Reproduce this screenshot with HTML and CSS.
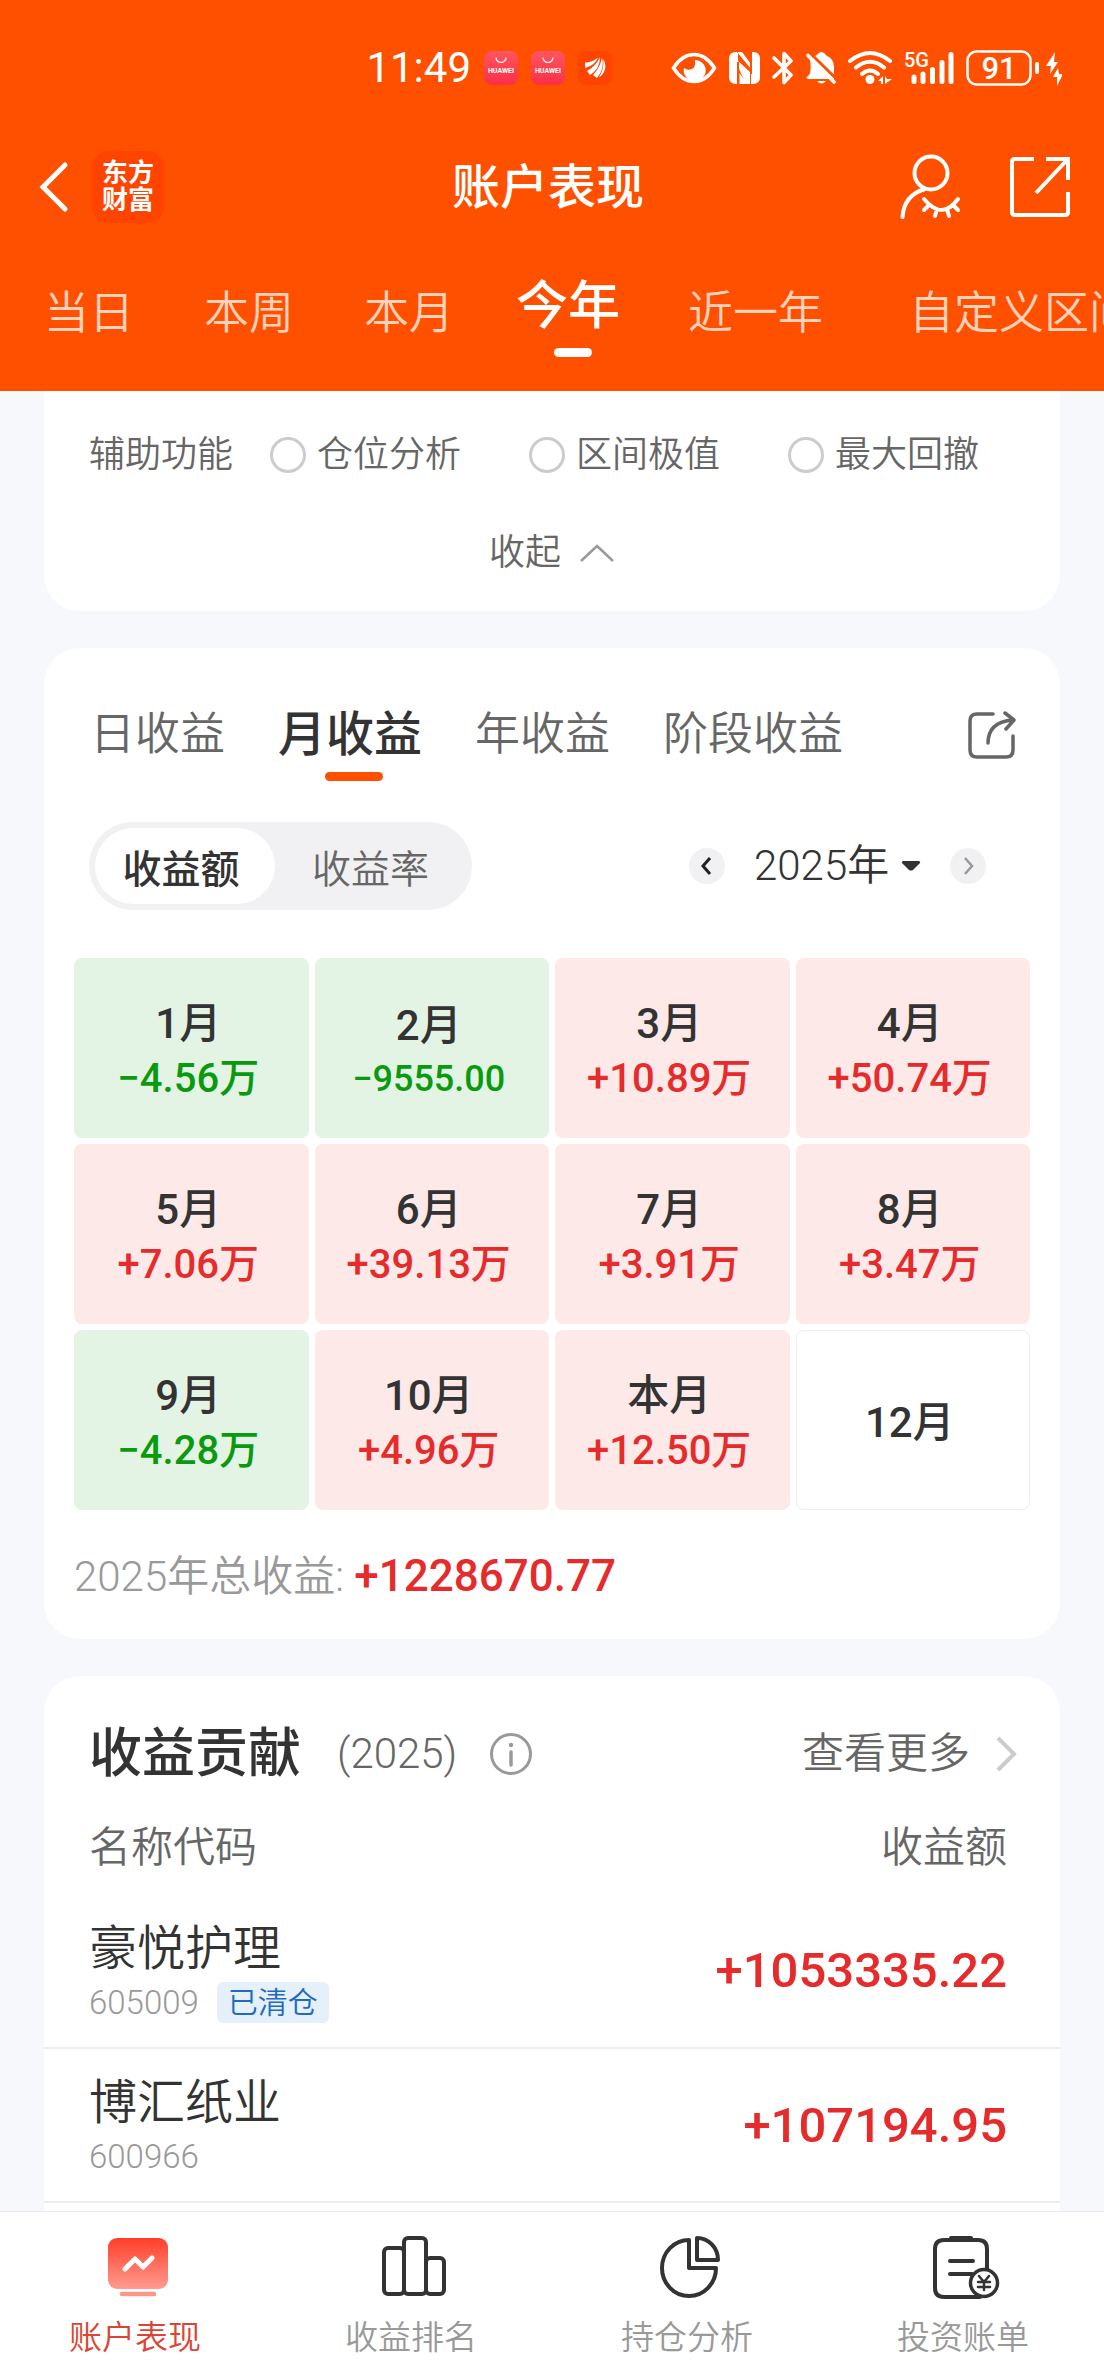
FILE: index.html
```html
<!DOCTYPE html>
<html lang="zh-CN">
<head>
<meta charset="utf-8">
<meta name="viewport" content="width=device-width, initial-scale=1">
<title>账户表现</title>
<link rel="stylesheet" href="styles.css">
</head>
<body>
<div class="app">
  <header class="top">
    <div class="status">
      <div class="status-left">
        <span class="clock">11:49</span>
        <svg class="app-dot" viewBox="0 0 34 34" aria-hidden="true"><defs><linearGradient id="hw" x1="0" y1="0" x2="0" y2="1"><stop offset="0" stop-color="#ff5560"/><stop offset="1" stop-color="#fb2f45"/></linearGradient></defs><rect width="34" height="34" rx="8" fill="url(#hw)"/><path d="M12 6.500a5 5 0 0 0 10 0" fill="none" stroke="#fff" stroke-width="1.200"/><text x="17" y="22" text-anchor="middle" class="hw-text">HUAWEI</text></svg>
        <svg class="app-dot" viewBox="0 0 34 34" aria-hidden="true"><rect width="34" height="34" rx="8" fill="url(#hw)"/><path d="M12 6.500a5 5 0 0 0 10 0" fill="none" stroke="#fff" stroke-width="1.200"/><text x="17" y="22" text-anchor="middle" class="hw-text">HUAWEI</text></svg>
        <svg class="app-dot" viewBox="0 0 34 34" aria-hidden="true"><rect width="34" height="34" rx="8" fill="#ff4400"/><g fill="#fff"><path d="M7 11.500Q14 11.500 20 6.500Q17 14.500 7 17Z"/><path d="M9 20Q18 15 22 6Q22 18 12 24Z"/><path d="M15 24Q22 17 24 6.500Q27 18 19 27Z"/><path d="M21 26.500Q26 18 25.500 8Q29 15 26 21Q24 25 21 26.500Z"/></g></svg>
      </div>
      <div class="status-right">
        <svg width="46" height="36" viewBox="0 0 46 36" aria-hidden="true"><path d="M2.500 18Q11 4.500 23 4.500T43.500 18Q35 31.500 23 31.500T2.500 18Z" fill="none" stroke="#fff" stroke-width="3.500"/><path d="M24 10a11 10.500 0 1 1-11 8q4 3 8 1t3-9Z" fill="#fff"/></svg>
        <svg width="31" height="36" viewBox="0 0 31 36" aria-hidden="true"><path d="M7 2h2v32H7q-7 0-7-7V9q0-7 7-7ZM22 2h2q7 0 7 7v18q0 7-7 7h-2ZM8 2l14 17v-5L13 2ZM9 11l12 11v12h-4L9 17Z" fill="#fff"/><path d="M9 12v22M22 2v22" stroke="#ff5000" stroke-width="2"/><path d="M10.500 23v11h8Z" fill="#fff"/></svg>
        <svg width="22" height="36" viewBox="0 0 22 36" aria-hidden="true"><path d="M2 8l17 17-7 7.500v-29L19 11 2 27" fill="none" stroke="#fff" stroke-width="3.600" stroke-linejoin="round" stroke-linecap="round"/></svg>
        <svg width="30" height="36" viewBox="0 0 30 36" aria-hidden="true"><path d="M4 10q2 13-2 16-3 2 0 3h26V17q0-8-7-11l-3-3q-3-2-5 0L8 7Z" fill="#fff"/><path d="M5 4L31 29.500" stroke="#ff5000" stroke-width="3"/><path d="M2 5.500L28 32" stroke="#fff" stroke-width="3.600" stroke-linecap="round"/><path d="M11 31h9q-4.500 5-9 0Z" fill="#fff"/></svg>
        <svg width="44" height="36" viewBox="0 0 44 36" fill="none" stroke="#fff" stroke-linecap="round" aria-hidden="true"><path d="M2 11Q22-5 42 11M8 17.500Q22 6 36 17.500M14 24Q22 17 30 24" stroke-width="4"/><circle cx="22" cy="29.500" r="4.500" fill="#fff" stroke="none"/><path d="M30 31l5-5v8h-2v-3ZM37 34v-8l2 3h5Z" fill="#fff" stroke="none"/></svg>
        <svg class="signal" width="50" height="36" viewBox="0 0 50 36" aria-hidden="true"><text x="0" y="17" class="net-text">5G</text><path d="M10 27v4.500M19 24v7.500M28.500 19.500v12M38 12.500v19M47 4.500v27" stroke="#fff" stroke-width="5" stroke-linecap="round"/></svg>
        <svg width="96" height="36" viewBox="0 0 96 36" aria-hidden="true"><rect x="1.500" y="1.500" width="63" height="33" rx="9" fill="none" stroke="#fff" stroke-width="2.500"/><path d="M71 14v8" stroke="#fff" stroke-width="4" stroke-linecap="round"/><text x="33" y="29" text-anchor="middle" class="bat-text">91</text><path d="M89 2l-9 14h5l-1 8 8-12h-4ZM92 18l-5 9h4l0 9 6-12h-4Z" fill="#fff"/></svg>
      </div>
    </div>
    <div class="titlebar">
      <div class="title-side">
        <button class="icon-btn" aria-label="返回"><svg width="32" height="52" viewBox="0 0 32 52"><path d="M27 4L5 26l22 22" fill="none" stroke="#fff" stroke-width="5" stroke-linecap="round"/></svg></button>
        <span class="brand">东方<br>财富</span>
      </div>
      <h1 class="title">账户表现</h1>
      <div class="title-side title-end">
        <button class="icon-btn" aria-label="隐藏账户"><svg width="62" height="68" viewBox="0 0 62 68" fill="none" stroke="#fff" stroke-width="4" stroke-linecap="round"><circle cx="31" cy="20" r="16.500"/><path d="M25 36Q4 42 2.500 64M24 46q18 22 34 0M29 52l-5 5M37 56l-2 7M47 56l2 7M53 52l5 5"/></svg></button>
        <button class="icon-btn" aria-label="分享"><svg width="60" height="62" viewBox="0 0 60 62" fill="none" stroke="#fff" stroke-width="4"><path d="M24 3H5q-3 0-3 3v50q0 3 3 3h50q3 0 3-3V36M36 3h22v21M57 4L26 37"/></svg></button>
      </div>
    </div>
    <nav class="periods">
      <button>当日</button><button>本周</button><button>本月</button><button class="on">今年</button><button>近一年</button><button class="custom">自定义区间</button>
    </nav>
  </header>

  <main class="content">
    <section class="card tools">
      <div class="tool-row">
        <span>辅助功能</span>
        <div class="tool-options">
          <label><input type="radio" name="tool">仓位分析</label>
          <label><input type="radio" name="tool">区间极值</label>
          <label><input type="radio" name="tool">最大回撤</label>
        </div>
      </div>
      <button class="fold">收起<svg width="36" height="20" viewBox="0 0 36 20"><path d="M2 18L18 3l16 15" fill="none" stroke="#999" stroke-width="2.500"/></svg></button>
    </section>

    <section class="card profit">
      <div class="profit-tabs">
        <button>日收益</button><button class="on">月收益</button><button>年收益</button><button>阶段收益</button>
        <button class="share" aria-label="分享收益"><svg width="48" height="50" viewBox="0 0 48 50" fill="none" stroke="#666" stroke-width="3.500" stroke-linecap="round" stroke-linejoin="round"><path d="M25 4H9Q2 4 2 11v29q0 7 7 7h29q7 0 7-7V26"/><path d="M20 33Q20 12 45 10M37 3l9 7-8 9"/></svg></button>
      </div>
      <div class="filters">
        <div class="segment"><button class="on">收益额</button><button>收益率</button></div>
        <div class="year">
          <button class="round" aria-label="上一年"><svg width="36" height="36" viewBox="0 0 36 36"><path d="M21 10l-7 8 7 8" fill="none" stroke="#222" stroke-width="3"/></svg></button>
          <span class="year-pick"><select aria-label="年份"><option>2025年</option></select><svg width="20" height="10" viewBox="0 0 20 10" aria-hidden="true"><path d="M2 0h16q2 1 1 2l-7 7q-2 1-4 0L1 2Q0 1 2 0Z" fill="#333"/></svg></span>
          <button class="round" aria-label="下一年"><svg width="36" height="36" viewBox="0 0 36 36"><path d="M15 10l7 8-7 8" fill="none" stroke="#999" stroke-width="2.500"/></svg></button>
        </div>
      </div>
      <ul class="months">
        <li class="down"><b>1月</b><span>−4.56万</span></li>
        <li class="down"><b>2月</b><span class="long">−9555.00</span></li>
        <li class="up"><b>3月</b><span>+10.89万</span></li>
        <li class="up"><b>4月</b><span>+50.74万</span></li>
        <li class="up"><b>5月</b><span>+7.06万</span></li>
        <li class="up"><b>6月</b><span>+39.13万</span></li>
        <li class="up"><b>7月</b><span>+3.91万</span></li>
        <li class="up"><b>8月</b><span>+3.47万</span></li>
        <li class="down"><b>9月</b><span>−4.28万</span></li>
        <li class="up"><b>10月</b><span>+4.96万</span></li>
        <li class="up"><b>本月</b><span>+12.50万</span></li>
        <li class="none"><b>12月</b></li>
      </ul>
      <p class="total">2025年总收益: <strong>+1228670.77</strong></p>
    </section>

    <section class="card contrib">
      <div class="contrib-head">
        <h2>收益贡献</h2>
        <span class="contrib-year">(2025)</span>
        <button class="icon-btn" aria-label="说明"><svg width="44" height="44" viewBox="0 0 44 44"><circle cx="22" cy="22" r="19.500" fill="none" stroke="#999" stroke-width="3"/><circle cx="22" cy="13" r="2.200" fill="#999"/><path d="M22 20v13" stroke="#999" stroke-width="3.500" stroke-linecap="round"/></svg></button>
        <a class="more" href="#more">查看更多<svg width="22" height="36" viewBox="0 0 22 36"><path d="M2 2l16 16L2 34" fill="none" stroke="#ccc" stroke-width="4"/></svg></a>
      </div>
      <table class="stocks">
        <thead><tr><th>名称代码</th><th>收益额</th></tr></thead>
        <tbody>
          <tr><td><div class="name">豪悦护理</div><div class="code">605009<span class="tag">已清仓</span></div></td><td>+1053335.22</td></tr>
          <tr><td><div class="name">博汇纸业</div><div class="code">600966</div></td><td>+107194.95</td></tr>
        </tbody>
      </table>
    </section>
  </main>

  <nav class="tabbar">
    <a class="on" href="#performance"><svg width="64" height="66" viewBox="0 0 64 66"><defs><linearGradient id="tb" x1="0" y1="0" x2="0" y2="1"><stop offset="0" stop-color="#ff3e28"/><stop offset="1" stop-color="#ff9c90"/></linearGradient></defs><rect x="2" y="5" width="60" height="51" rx="9" fill="url(#tb)"/><path d="M19 36l10-10 8 8 9-9" fill="none" stroke="#fff" stroke-width="5" stroke-linecap="round" stroke-linejoin="round"/><path d="M16 61h32" stroke="#f9998c" stroke-width="4.500" stroke-linecap="round"/></svg><span>账户表现</span></a>
    <a href="#rank"><svg width="64" height="66" viewBox="0 0 64 66" fill="none" stroke="#333" stroke-width="4"><rect x="2" y="15" width="20" height="46" rx="4"/><rect x="22" y="5" width="22" height="56" rx="4"/><rect x="44" y="25" width="18" height="36" rx="4"/></svg><span>收益排名</span></a>
    <a href="#holdings"><svg width="64" height="66" viewBox="0 0 64 66" fill="none" stroke="#333" stroke-width="4" stroke-linejoin="round"><path d="M31 7A27 28 0 1 0 58 35H31Z"/><path d="M39 5v22h21A21 22 0 0 0 39 5Z"/></svg><span>持仓分析</span></a>
    <a href="#bill"><svg width="68" height="66" viewBox="0 0 68 66" fill="none" stroke="#333" stroke-width="4" stroke-linecap="round"><path d="M48 64H12q-9 0-9-9V16q0-9 9-9h34q9 0 9 9v20M19 5h20M18 28h23M18 41h22"/><circle cx="52" cy="50" r="13.500" fill="#fff" stroke-width="3.500"/><path d="M47 43l5 6 5-6M52 49v8M46 49h12M46 54h12" stroke-width="2.500"/></svg><span>投资账单</span></a>
  </nav>
</div>
</body>
</html>
```

FILE: styles.css
```css
* { box-sizing: border-box; }
body {
  margin: 0;
  background: #f6f8fb;
  color: #333;
  font-family: Roboto, "Noto Sans CJK SC", sans-serif;
  font-weight: 350;
}
button, select, input { font: inherit; color: inherit; margin: 0; padding: 0; border: 0; background: none; }
h1, h2, p, ul { margin: 0; padding: 0; }
ul { list-style: none; }
a { color: inherit; text-decoration: none; }
svg { display: block; flex: none; }
.app { display: flex; flex-direction: column; min-height: 100vh; }

.top { background: #ff5000; color: #fff; overflow: hidden; padding-bottom: 45px; }
.status { display: flex; justify-content: flex-end; align-items: center; gap: 59px; padding: 44px 42px 0 0; height: 92px; }
.status-left { display: flex; align-items: center; gap: 13px; }
.status-right { display: flex; align-items: center; gap: 12px; }
.clock { font-size: 42px; line-height: 48px; font-weight: 400; }
.app-dot { width: 34px; height: 34px; }
.signal { overflow: visible; }
.hw-text { font: 700 7px Roboto, sans-serif; fill: #fff; }
.net-text { font: 500 20px Roboto, sans-serif; fill: #fff; }
.bat-text { font: 500 31px Roboto, sans-serif; fill: #fff; }

.titlebar { display: grid; grid-template-columns: 1fr auto 1fr; align-items: center; height: 190px; padding: 0 34px 0 38px; }
.title-side { display: flex; align-items: center; gap: 22px; }
.title-end { justify-content: flex-end; gap: 48px; }
.icon-btn { display: block; }
.brand { background: #ff4400; border-radius: 16px; padding: 9px 10px; font-size: 26px; line-height: 27px; font-weight: 700; }
.title { font-size: 48px; line-height: 64px; font-weight: 500; padding: 2px 12px 0 0; }

.periods { display: flex; align-items: center; gap: 70px; padding-left: 44px; height: 64px; white-space: nowrap; color: #ffd2bc; }
.periods button { flex: none; position: relative; font-size: 45px; line-height: 60px; }
.periods .on { color: #fff; font-size: 52px; font-weight: 500; margin: 0 -2px 0 -8px; padding-bottom: 14px; }
.periods .on::after { content: ""; position: absolute; left: 50%; bottom: -6px; width: 38px; height: 9px; margin-left: -14px; border-radius: 5px; background: #fff; }
.periods .custom { margin-left: 16px; }

.content { flex: 1; display: flex; flex-direction: column; gap: 37px; padding: 0 44px; }
.card { background: #fff; border-radius: 36px; }

.tools { border-radius: 0 0 36px 36px; padding: 40px 45px 34px; color: #666; font-size: 36px; line-height: 48px; display: flex; flex-direction: column; gap: 50px; }
.tool-row { display: flex; gap: 37px; }
.tool-options { display: flex; gap: 68px; }
.tool-options label { display: flex; align-items: center; gap: 11px; }
.tool-options input { appearance: none; width: 36px; height: 36px; border: 3px solid #ccc; border-radius: 50%; }
.fold { display: flex; justify-content: center; align-items: center; gap: 18px; }

.profit { padding: 52px 30px 34px; }
.profit-tabs { display: flex; align-items: center; gap: 53px; padding: 0 14px 0 16px; height: 70px; color: #666; }
.profit-tabs button { position: relative; font-size: 45px; line-height: 64px; }
.profit-tabs .on { color: #333; font-size: 48px; font-weight: 500; }
.profit-tabs .on::after { content: ""; position: absolute; left: 50%; bottom: -14px; width: 58px; height: 9px; margin-left: -25px; border-radius: 5px; background: #ff5000; }
.profit-tabs .share { margin-left: auto; }
.filters { display: flex; justify-content: space-between; align-items: center; margin-top: 52px; padding: 0 44px 0 15px; }
.segment { display: flex; background: #f1f1f3; border-radius: 44px; padding: 6px; height: 88px; color: #666; }
.segment button { width: 191px; border-radius: 38px; font-size: 39px; }
.segment .on { width: 180px; padding-right: 8px; background: #fff; color: #333; font-weight: 500; }
.year { display: flex; align-items: center; gap: 29px; }
.round { border-radius: 50%; background: #f1f1f3; }
.year-pick { display: flex; align-items: center; gap: 11px; }
.year select { appearance: none; font-size: 42px; line-height: 56px; }

.months { display: grid; grid-template-columns: repeat(4, 1fr); gap: 6px; margin-top: 48px; }
.months li { display: flex; flex-direction: column; align-items: center; justify-content: center; gap: 3px; height: 180px; padding: 6px 6px 0 0; border-radius: 8px; font-weight: 500; }
.months b { font-size: 42px; line-height: 52px; font-weight: 500; }
.months span { font-size: 40px; line-height: 52px; }
.months .long { font-size: 36px; line-height: 48px; }
.up { background: #fce9e8; }
.up span, .total strong, .stocks td:last-child { color: #e52b2b; }
.down { background: #e4f4e4; }
.down span { color: #0a9a0f; }
.none { border: 1px solid #eee; }
.total { margin-top: 38px; font-size: 42px; line-height: 56px; color: #999; }
.total strong { font-size: 44px; font-weight: 500; }

.contrib { border-radius: 36px 36px 0 0; padding-bottom: 8px; }
.contrib-head { display: flex; align-items: center; padding: 42px 42px 0 45px; font-size: 42px; line-height: 56px; color: #666; }
.contrib-head h2 { font-size: 53px; line-height: 72px; font-weight: 500; color: #333; margin-right: 36px; }
.contrib-year { margin-right: 32px; }
.more { display: flex; align-items: center; gap: 26px; margin-left: auto; }
.stocks { width: 100%; border-collapse: collapse; }
.stocks th { padding: 30px 45px 18px; font-size: 42px; line-height: 56px; font-weight: inherit; color: #666; text-align: left; }
.stocks td { height: 154px; padding: 0 45px; border-bottom: 2px solid #eee; }
.stocks th:last-child, .stocks td:last-child { text-align: right; padding-right: 53px; }
.stocks td:last-child { font-size: 49px; font-weight: 500; }
.name { font-size: 48px; line-height: 64px; }
.code { display: flex; align-items: center; gap: 18px; height: 44px; font-size: 33px; line-height: 44px; color: #999; }
.tag { background: #e6f0fa; color: #1f6bbd; border-radius: 6px; padding: 0 11px; font-size: 30px; line-height: 41px; }

.tabbar { position: sticky; bottom: 0; display: grid; grid-template-columns: repeat(4, 1fr); background: #fff; border-top: 1px solid #e6e8eb; height: 166px; padding-top: 21px; font-size: 33px; line-height: 44px; color: #999; }
.tabbar a { display: flex; flex-direction: column; align-items: center; gap: 17px; }
.tabbar span { padding-right: 6px; }
.tabbar .on { color: #dc4433; }
```
